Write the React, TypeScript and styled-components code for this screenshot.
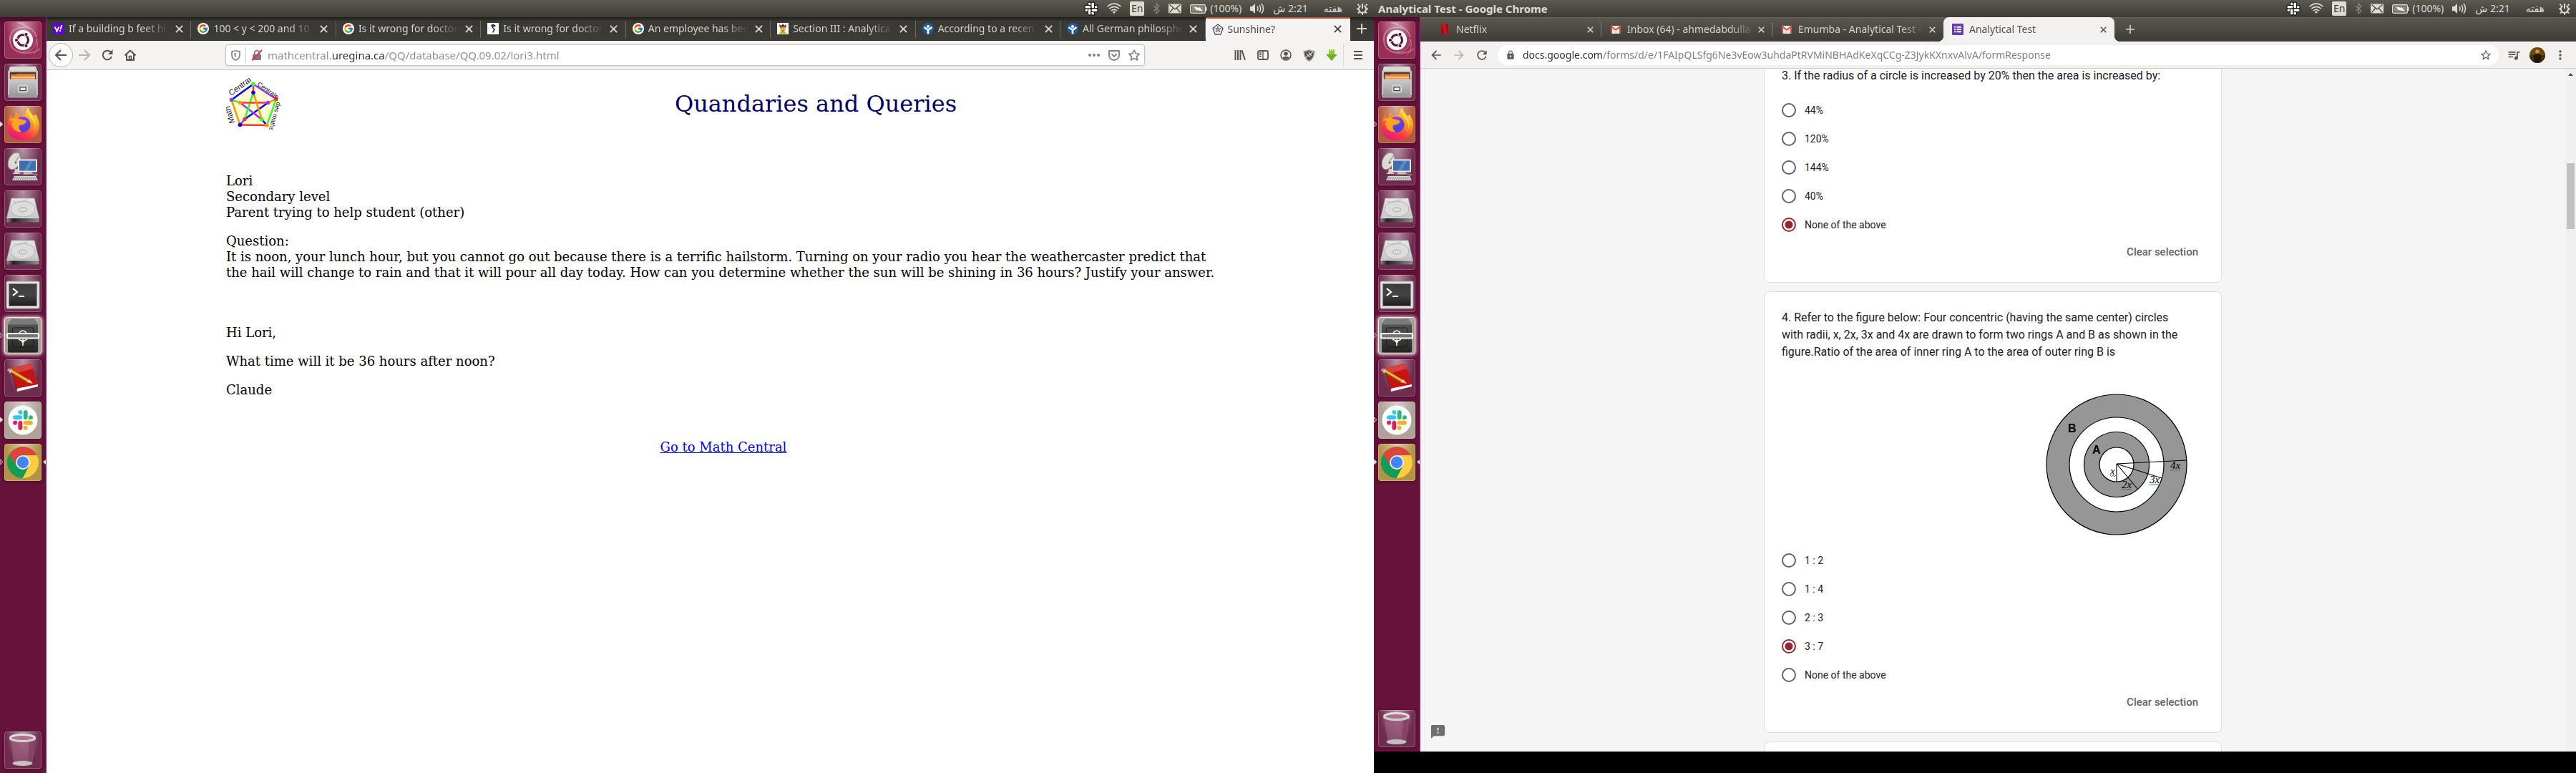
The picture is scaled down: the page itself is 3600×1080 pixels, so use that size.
import React, { useLayoutEffect, useRef } from "react";
import styled, { createGlobalStyle, css } from "styled-components";
import { FcGoogle } from "react-icons/fc";
import { MdLock, MdOutlineStarBorder, MdQueueMusic, MdMoreVert, MdFeedback, MdArrowBack, MdArrowForward, MdRefresh } from "react-icons/md";

const uiFont = `"Noto Sans", "Open Sans", "DejaVu Sans", sans-serif`;

const GlobalStyle = createGlobalStyle`
  *, *::before, *::after { box-sizing: border-box; }
  body { margin: 0; background: #000; }
  button { border: 0; padding: 0; margin: 0; background: none; color: inherit; font: inherit; }
  svg { display: block; flex: none; }
`;

/* ---------- desktop ---------- */

const Desktop = styled.div`
  display: grid;
  grid-template-columns: 8fr 7fr;
  height: 100vh;
  font-family: ${uiFont};
  font-size: 14px;
`;

const Screen = styled.section<{ $shorter?: boolean }>`
  display: flex;
  flex-direction: column;
  min-width: 0;
  min-height: 0;
  margin-bottom: ${(p) => (p.$shorter ? 30 : 0)}px;
`;

const Panel = styled.header`
  display: flex;
  align-items: center;
  justify-content: space-between;
  height: 24px;
  flex: none;
  padding: 0 8px 0 6px;
  color: #dfdbd2;
  background: linear-gradient(#5f5d50 0, #59574e 2px, #3e3d38 100%);
`;

const PanelTitle = styled.strong`
  font-size: 15px;
  line-height: 20px;
  font-weight: 700;
`;

const Indicators = styled.div`
  display: flex;
  align-items: center;
  gap: 12px;
  line-height: 20px;
`;

const LanguageBadge = styled.span`
  width: 20px;
  height: 20px;
  border-radius: 2px;
  background: #dfdbd2;
  color: #3c3b37;
  font-size: 14px;
  text-align: center;
`;

const Battery = styled.span`
  display: flex;
  align-items: center;
  gap: 4px;
`;

const Clock = styled.time`
  display: flex;
  gap: 22px;
  margin-right: 8px;
`;

const Workspace = styled.div`
  display: flex;
  flex: 1;
  min-height: 0;
`;

/* ---------- launcher ---------- */

const LauncherBar = styled.nav`
  display: flex;
  flex-direction: column;
  gap: 7px;
  width: 65px;
  flex: none;
  padding: 6px 0;
  background: linear-gradient(#4a0c29 0, #67123a 10px);
  border-right: 1px solid #7d3573;
`;

const Tile = styled.button<{ $tone?: string; $glow?: boolean; $last?: boolean }>`
  position: relative;
  width: 52px;
  height: 52px;
  margin: ${(p) => (p.$last ? "auto 6px 0" : "0 6px")};
  border-radius: 4px;
  background: radial-gradient(ellipse at 50% 0, rgba(255, 255, 255, 0.5), rgba(255, 255, 255, 0) 65%),
    ${(p) => p.$tone || "#6f2c4f"};
  box-shadow: inset 0 0 0 1px rgba(255, 255, 255, 0.25), 0 1px 4px rgba(0, 0, 0, 0.35);
  ${(p) =>
    p.$glow &&
    css`
      box-shadow: inset 0 0 0 1px #f4f0ec, 0 0 5px 1px rgba(255, 255, 255, 0.8);
    `}
`;

const Pip = styled.svg<{ $side: "left" | "right" }>`
  position: absolute;
  top: 21px;
  ${(p) => (p.$side === "left" ? "left: -6px;" : "right: -6px;")}
`;

/* ---------- shared browser parts ---------- */

const Window = styled.main`
  display: flex;
  flex-direction: column;
  flex: 1;
  min-width: 0;
`;

const TabTitle = styled.span`
  flex: 1;
  min-width: 0;
  overflow: hidden;
  white-space: nowrap;
  line-height: 20px;
  mask-image: linear-gradient(to left, transparent 0, #000 36px);
`;

const CloseButton = styled.button`
  display: grid;
  place-items: center;
  width: 16px;
  height: 16px;
`;

const IconButton = styled.button<{ $faded?: boolean }>`
  display: grid;
  place-items: center;
  width: 32px;
  height: 32px;
  flex: none;
  color: ${(p) => (p.$faded ? "#b4b3b0" : "#55534f")};
`;

const Address = styled.input<{ $size: number; $from: number; $to: number; $soft: string; $strong: string }>`
  flex: 1;
  min-width: 0;
  border: 0;
  outline: 0;
  padding: 0;
  height: 24px;
  font: ${(p) => p.$size}px/24px ${uiFont};
  color: transparent;
  background: linear-gradient(
    to right,
    ${(p) => p.$soft} ${(p) => p.$from}px,
    ${(p) => p.$strong} ${(p) => p.$from}px,
    ${(p) => p.$strong} ${(p) => p.$to}px,
    ${(p) => p.$soft} ${(p) => p.$to}px
  );
  background-clip: text;
  -webkit-background-clip: text;
`;

/* ---------- firefox ---------- */

const FoxTabs = styled.div`
  display: flex;
  height: 33px;
  background: linear-gradient(#1e1d1b 0, #3a3935 6px, #3c3b37 100%);
  border-bottom: 1px solid #2a2926;
`;

const FoxTab = styled.div<{ $active?: boolean }>`
  display: flex;
  align-items: center;
  gap: 6px;
  flex: 1;
  min-width: 0;
  padding: 0 9px;
  color: ${(p) => (p.$active ? "#4c4b48" : "#d6d3cc")};
  background: ${(p) => (p.$active ? "#f4f3f1" : "linear-gradient(#6b6a66, #6b6a66) right 5px / 1px 24px no-repeat")};
  ${(p) => p.$active && "margin-bottom: -1px; box-shadow: inset 0 2px #b3573b;"}
`;

const FoxNewTab = styled.button`
  display: grid;
  place-items: center;
  width: 33px;
  color: #d6d3cc;
`;

const FoxToolbar = styled.div`
  display: flex;
  align-items: center;
  height: 41px;
  padding: 0 3px;
  background: #f4f3f1;
  border-bottom: 1px solid #c3c2c0;
`;

const BackCircle = styled(IconButton)`
  width: 34px;
  height: 34px;
  border-radius: 50%;
  border: 1px solid #b5b4b1;
  background: #fcfcfb;
`;

const FoxUrl = styled.form`
  display: flex;
  align-items: center;
  flex: 1;
  min-width: 0;
  height: 30px;
  margin: 0 117px;
  padding: 0 0 0 6px;
  background: #fff;
  border: 1px solid #c3c2c0;
  border-radius: 4px;
  box-shadow: 0 1px 3px rgba(0, 0, 0, 0.07);
`;

const UrlButton = styled.button<{ $wide?: boolean }>`
  display: grid;
  place-items: center;
  width: ${(p) => (p.$wide ? 30 : 28)}px;
  height: 22px;
  color: #7d7c79;
`;

const ShieldButton = styled(UrlButton)`
  width: 22px;
  padding-right: 6px;
  border-right: 1px solid #c9c8c6;
`;

const MenuButton = styled(IconButton)`
  width: 40px;
  border-left: 1px solid #d8d7d4;
`;

const MathPage = styled.article`
  flex: 1;
  padding: 11px 214px 0 251px;
  background: #fff;
  color: #000;
  font: 18px/22px "DejaVu Serif", serif;
`;

const MathHeader = styled.div`
  display: flex;
  align-items: center;
  margin-bottom: 61px;
`;

const LogoCell = styled.div`
  width: 258px;
`;

const MathTitle = styled.h1`
  flex: 1;
  margin: 0;
  color: #000066;
  font-size: 32px;
  line-height: 40px;
  font-weight: 400;
  text-align: center;
`;

const Para = styled.p<{ $after?: number }>`
  margin: 0 0 ${(p) => p.$after ?? 18}px;
`;

const CentredLink = styled.div`
  text-align: center;
  a { color: #0000ee; }
`;

/* ---------- chrome ---------- */

const ChromeTabs = styled.div`
  display: flex;
  height: 34px;
  padding-left: 14px;
  background: linear-gradient(#67655a 0, #59574e 2px, #3c3b37 100%);
`;

const ChromeTab = styled.div<{ $active?: boolean; $line?: boolean }>`
  position: relative;
  display: flex;
  align-items: center;
  gap: 8px;
  width: 239px;
  padding: 0 8px 0 12px;
  color: ${(p) => (p.$active ? "#55534f" : "#d6d3cc")};
  ${CloseButton} { margin-left: -8px; }
  ${(p) => p.$line && "background: linear-gradient(#85837b, #85837b) right 7px / 1px 20px no-repeat;"}
  ${(p) =>
    p.$active &&
    css`
      background: #f2f1f0;
      border-radius: 8px 8px 0 0;
      &::before, &::after {
        content: "";
        position: absolute;
        bottom: 0;
        width: 8px;
        height: 8px;
      }
      &::before { left: -8px; background: radial-gradient(circle at 0 0, transparent 8px, #f2f1f0 8px); }
      &::after { right: -8px; background: radial-gradient(circle at 100% 0, transparent 8px, #f2f1f0 8px); }
    `}
`;

const ChromeNewTab = styled.button`
  display: grid;
  place-items: center;
  width: 44px;
  color: #d6d3cc;
`;

const ChromeToolbar = styled.div`
  display: flex;
  align-items: center;
  height: 38px;
  padding: 0 6px;
  background: #f2f1f0;
  border-bottom: 1px solid #cfcecb;
`;

const ChromeUrl = styled.form`
  display: flex;
  align-items: center;
  gap: 10px;
  flex: 1;
  min-width: 0;
  height: 28px;
  margin: 0 5px 0 6px;
  padding: 0 9px 0 11px;
  border-radius: 14px;
  background: #fff;
  color: #5f5e5b;
`;

const Avatar = styled.button`
  width: 22px;
  height: 22px;
  margin: 0 5px 0 6px;
`;

const FormArea = styled.div`
  display: flex;
  flex: 1;
  min-height: 0;
  background: #f5f5f5;
`;

const FormScroll = styled.div`
  flex: 1;
  min-width: 0;
  overflow: hidden;
`;

const FormColumn = styled.div`
  display: flex;
  flex-direction: column;
  gap: 12px;
  max-width: 640px;
  margin: 0 auto;
`;

const Card = styled.fieldset<{ $empty?: boolean }>`
  margin: 0;
  min-width: 0;
  min-height: ${(p) => (p.$empty ? 160 : 0)}px;
  padding: 24px;
  border: 1px solid #dadce0;
  border-radius: 8px;
  background: #fff;
  color: #202124;
  font-family: Roboto, sans-serif;
`;

const Prompt = styled.legend`
  float: left;
  width: 100%;
  padding: 0 24px 0 0;
  margin-bottom: 16px;
  font-size: 16px;
  line-height: 24px;
`;

const Figure = styled.figure`
  clear: both;
  display: flex;
  justify-content: flex-end;
  margin: 0;
  padding: 30px 23px 15px 0;
`;

const Options = styled.div`
  clear: both;
`;

const Option = styled.label`
  display: flex;
  align-items: center;
  gap: 12px;
  height: 40px;
  font-size: 14px;
  line-height: 20px;
`;

const Radio = styled.input`
  appearance: none;
  width: 20px;
  height: 20px;
  margin: 0;
  border: 2px solid #5f6368;
  border-radius: 50%;
  &:checked {
    border-color: #952734;
    background: radial-gradient(circle, #952734 5px, transparent 6px);
  }
`;

const CardFooter = styled.div`
  display: flex;
  justify-content: flex-end;
  padding-right: 8px;
`;

const ClearButton = styled.button`
  height: 36px;
  color: #5f6368;
  font-size: 15px;
  font-weight: 500;
`;

/* Floats over the left margin of the form without taking room from it. */
const FeedbackSpot = styled.div`
  display: flex;
  align-items: flex-end;
  width: 36px;
  margin-right: -36px;
  padding: 0 0 16px 13px;
  color: #6f6f6f;
`;

const ScrollTrack = styled.div`
  display: flex;
  flex-direction: column;
  align-items: center;
  width: 15px;
  padding-top: 6px;
  background: #f1f1f1;
`;

const ScrollThumb = styled.div`
  width: 11px;
  height: 92px;
  margin-top: 122px;
  background: #c1c1c1;
`;

/* ---------- drawings ---------- */

const slackParts: [string, string][] = [
  ["#E01E5A", "M25.8 77.6c0 7.1-5.8 12.9-12.9 12.9S0 84.7 0 77.6s5.8-12.9 12.9-12.9h12.9v12.9zm6.5 0c0-7.1 5.8-12.9 12.9-12.9s12.9 5.8 12.9 12.9v32.3c0 7.1-5.8 12.9-12.9 12.9s-12.9-5.8-12.9-12.9V77.6z"],
  ["#36C5F0", "M45.2 25.8c-7.1 0-12.9-5.8-12.9-12.9S38.1 0 45.2 0s12.9 5.8 12.9 12.9v12.9H45.2zm0 6.5c7.1 0 12.9 5.8 12.9 12.9s-5.8 12.9-12.9 12.9H12.9C5.8 58.1 0 52.3 0 45.2s5.8-12.9 12.9-12.9h32.3z"],
  ["#2EB67D", "M97 45.2c0-7.1 5.8-12.9 12.9-12.9s12.9 5.8 12.9 12.9-5.8 12.9-12.9 12.9H97V45.2zm-6.5 0c0 7.1-5.8 12.9-12.9 12.9s-12.9-5.8-12.9-12.9V12.9C64.7 5.8 70.5 0 77.6 0s12.9 5.8 12.9 12.9v32.3z"],
  ["#ECB22E", "M77.6 97c7.1 0 12.9 5.8 12.9 12.9s-5.8 12.9-12.9 12.9-12.9-5.8-12.9-12.9V97h12.9zm0-6.5c-7.1 0-12.9-5.8-12.9-12.9s5.8-12.9 12.9-12.9h32.3c7.1 0 12.9 5.8 12.9 12.9s-5.8 12.9-12.9 12.9H77.6z"],
];

const SlackStatus = () => (
  <svg width="20" height="20" viewBox="-10 -10 143 143">
    {slackParts.map(([c, d]) => <path key={c} d={d} fill="#fff" stroke="#111" strokeWidth="16" paintOrder="stroke" />)}
  </svg>
);

const Wifi = () => (
  <svg width="20" height="16" viewBox="0 0 20 16" fill="none" stroke="#dfdbd2" strokeWidth="1.6">
    <path d="M.6 5.2Q10-3 19.4 5.2M3.2 8.2Q10 2.4 16.8 8.2M5.8 11Q10 7.6 14.2 11" />
    <path d="M7.6 12.6 10 15l2.4-2.4q-2.4-1.6-4.8 0z" fill="#dfdbd2" stroke="none" />
  </svg>
);

const Bluetooth = () => (
  <svg width="10" height="16" viewBox="0 0 10 16" fill="none" stroke="#85837b" strokeWidth="1.4">
    <path d="M1 4.5 9 11 5 15V1l4 4-8 6.5" />
  </svg>
);

const Mail = () => (
  <svg width="18" height="14" viewBox="0 0 18 14">
    <rect width="18" height="13" y=".5" rx="1" fill="#dfdbd2" />
    <path d="M1.5 1.5 9 8l7.5-6.5M1.5 12.5l5.1-6M16.5 12.5l-5.1-6" fill="none" stroke="#44433d" strokeWidth="1.2" />
  </svg>
);

const BatteryIcon = () => (
  <svg width="24" height="13" viewBox="0 0 24 13">
    <rect x=".7" y=".7" width="20.6" height="11.6" rx="1.5" fill="none" stroke="#dfdbd2" strokeWidth="1.4" />
    <rect x="2.5" y="2.5" width="17" height="8" fill="#8b8980" />
    <path d="M22 4h1.5v5H22z" fill="#dfdbd2" />
    <path d="M5 3l8 2V3.500L18 10l-8-2v1.500z" fill="#f4f2ee" />
  </svg>
);

const Volume = () => (
  <svg width="20" height="16" viewBox="0 0 20 16" fill="none" stroke="#dfdbd2" strokeWidth="1.5">
    <path d="M0 5h3l4-4v14l-4-4H0z" fill="#dfdbd2" stroke="none" />
    <path d="M10 5q2 3 0 6M13 3q3.5 5 0 10M16 1q5 7 0 14" />
  </svg>
);

const Power = () => (
  <svg width="16" height="17" viewBox="0 0 16 17" fill="none" stroke="#dfdbd2" strokeWidth="2">
    <path d="M5.500 4A5.200 5.200 0 1 0 10.500 4" />
    <path d="M8 1v7" />
    <path d="M3 3.500 1.500 2M13 3.500 14.500 2M2.500 8.500H0M13.500 8.500H16M3.800 12.600 2 14.500M12.200 12.600l1.800 1.900M8 14v2.800" />
  </svg>
);

const Cross = ({ size = 9 }: { size?: number }) => (
  <svg width={size} height={size} viewBox="0 0 10 10" stroke="currentColor" strokeWidth="1.8">
    <path d="M.8.8 9.2 9.2M9.2.8.8 9.2" />
  </svg>
);

const Plus = ({ size = 14 }: { size?: number }) => (
  <svg width={size} height={size} viewBox="0 0 14 14" stroke="currentColor" strokeWidth="2">
    <path d="M7 0v14M0 7h14" />
  </svg>
);

const Drive = () => (
  <svg width="52" height="52" viewBox="0 0 52 52">
    <defs>
      <linearGradient id="driveTop" x2="0" y2="1"><stop stopColor="#e6e6e6" /><stop offset="1" stopColor="#c6c6c6" /></linearGradient>
      <linearGradient id="driveFront"><stop stopColor="#888" /><stop offset=".2" stopColor="#222" /><stop offset="1" stopColor="#8b8f8b" /></linearGradient>
    </defs>
    <path d="M10 11h32l6.5 27h-45z" fill="url(#driveTop)" stroke="#aaa" strokeWidth=".6" />
    <path d="M3.5 38.500h45v5q0 1-1 1h-43q-1 0-1-1z" fill="url(#driveFront)" />
    <path d="M3.5 38.500h45" stroke="#f5f5f5" />
    <ellipse cx="26" cy="26" rx="17" ry="11" fill="#dcdcdc" stroke="#b2b2b2" />
    <ellipse cx="26" cy="27" rx="5.5" ry="3" fill="#ddd" stroke="#aaa" />
    <path d="M12 15q10 4 20-3" fill="none" stroke="#bbb" />
  </svg>
);

const art: Record<string, React.ReactNode> = {
  dash: (
    <svg width="52" height="52" viewBox="0 0 52 52">
      <g fill="none" stroke="#fff" opacity=".35">
        <path d="M8 26Q8 8 28 8q14 1 17 14Q42 8 18 1" strokeWidth="1.5" /><path d="M26 43q19-1 19-19 4 12-4 22" /><path d="M8 20q-3 22 20 24 14 1 22-6" strokeWidth="1.5" />
      </g>
      <circle cx="26" cy="26" r="14" fill="#fff" />
      <circle cx="26" cy="26" r="7.5" fill="none" stroke="#5b1434" strokeWidth="3.2" />
      <g fill="#5b1434" stroke="#fff" strokeWidth="1"><circle cx="17" cy="26" r="2.6" /><circle cx="30.5" cy="18" r="2.6" /><circle cx="30.5" cy="34" r="2.6" /></g>
    </svg>
  ),
  files: (
    <svg width="52" height="52" viewBox="0 0 52 52">
      <defs><linearGradient id="cab" x2="0" y2="1"><stop stopColor="#c9c9c9" /><stop offset="1" stopColor="#949494" /></linearGradient></defs>
      <path d="M8 4h36l3 10v30H5V14z" fill="#d9d9d9" /><path d="M5 10h42v33H5z" fill="#b9b9b9" />
      <path d="M8 12h36v10H8z" fill="#453b33" />
      <path d="M9 15h8l1-1h25v8H9z" fill="#e87b32" /><path d="M10 18h33v3H10z" fill="#fbdcb4" /><path d="M10 19.500h33v2.500H10z" fill="#ef9a4f" />
      <path d="M7 22h38l1 25H6z" fill="url(#cab)" stroke="#ddd" strokeWidth=".6" />
      <rect x="19.5" y="30" width="13" height="10" rx="2" fill="#bdbdbd" stroke="#e2e2e2" />
      <rect x="22" y="33" width="8" height="4.5" fill="#eee" stroke="#333" />
    </svg>
  ),
  firefox: (
    <svg width="52" height="52" viewBox="0 0 52 52">
      <defs>
        <linearGradient id="foxBody" x1=".8" y1="0" x2=".3" y2="1"><stop stopColor="#fff44f" /><stop offset=".4" stopColor="#ff9a1f" /><stop offset=".75" stopColor="#ff3647" /><stop offset="1" stopColor="#e31587" /></linearGradient>
        <radialGradient id="foxGlobe" cy=".2"><stop stopColor="#a23fe0" /><stop offset="1" stopColor="#5440d8" /></radialGradient>
      </defs>
      <path d="M33 2q2 6 8 12l3-2q5 8 5 15-1 21-23 21Q5 47 4 29q0-9 6-17l1 6 4-3 1-6q4 3 5 6 5 0 8-3 1-6 4-10z" fill="url(#foxBody)" />
      <circle cx="25.5" cy="26" r="11" fill="url(#foxGlobe)" />
      <path d="M6 20q8-6 15-2l10 3q-1 5-10 6-2 5 3 9-9 1-13-7-2-5 1-8z" fill="#ffa425" />
      <path d="M33 3q3 9 8 14 6 9-1 20 5-10-1-18-7-7-6-16z" fill="#ffe647" opacity=".8" />
    </svg>
  ),
  remote: (
    <svg width="52" height="52" viewBox="0 0 52 52">
      <ellipse cx="14" cy="18" rx="8" ry="12.5" transform="rotate(25 14 18)" fill="#dcdcd4" stroke="#8e8e86" />
      <path d="M16 18l6-8" stroke="#777" /><circle cx="16" cy="20" r="1.5" fill="#666" />
      <path d="M15 29h4l1 5 3 2H11l3-2z" fill="#cfcfc8" />
      <rect x="19" y="15.5" width="27" height="18" rx="1" fill="#e9e9e4" />
      <rect x="21" y="17.5" width="23" height="14" fill="#3e6ead" /><path d="M28 31l7-13h5l-7 13z" fill="#7ea3d3" opacity=".5" />
      <path d="M28 33.500h10l3 3H26z" fill="#c9c9c2" />
      <path d="M14 39h30l3 6H11z" fill="#d8d8d0" /><path d="M14 41h30M13 43h32" stroke="#777" strokeDasharray="2 1" />
      <path d="M35 36h8q5 0 3 2h-5" fill="none" stroke="#999" />
    </svg>
  ),
  drive: <Drive />,
  terminal: (
    <svg width="52" height="52" viewBox="0 0 52 52">
      <defs><linearGradient id="term" x2="0" y2="1"><stop stopColor="#3c3c3c" /><stop offset=".5" stopColor="#444" /><stop offset="1" stopColor="#1c1c1c" /></linearGradient></defs>
      <rect x="3" y="9" width="46" height="38" rx="1.5" fill="#e3e3e3" stroke="#9d9d9d" />
      <rect x="6.5" y="12.5" width="39" height="31" fill="url(#term)" stroke="#8a8a8a" />
      <path d="M12 19l6 5-6 5M20 30h8" fill="none" stroke="#fff" strokeWidth="2.2" />
    </svg>
  ),
  vault: (
    <svg width="52" height="52" viewBox="0 0 52 52">
      <defs><linearGradient id="safe" x2="0" y2="1"><stop stopColor="#5d605d" /><stop offset="1" stopColor="#232522" /></linearGradient></defs>
      <path d="M10 2.500h32l5 8v37q0 2-2 2H7q-2 0-2-2v-37z" fill="url(#safe)" />
      <path d="M10 2.500h32l5 8H5z" fill="#787b79" />
      <rect x="11.5" y="15" width="29" height="27" rx="2" fill="none" stroke="#1c1d1c" />
      <path d="M21 22q5-6 10 0" fill="none" stroke="#eee" strokeWidth="1.5" />
      <path d="M20 31l6 3 6-3M26 31v9" fill="none" stroke="#eee" strokeWidth="1.6" /><circle cx="26" cy="34" r="2" fill="#fff" />
      <rect x="4" y="23" width="44" height="6.5" rx="2" fill="#777" stroke="#fff" strokeWidth="2" />
    </svg>
  ),
  notes: (
    <svg width="52" height="52" viewBox="0 0 52 52">
      <path d="M9 12 38 6l9 30-29 7z" fill="#c81316" /><path d="M9 12 38 6l2 7-28 8z" fill="#d9403b" />
      <path d="M17 41l30-6v3l-29 7z" fill="#fff" /><path d="M9 12l9 31" stroke="#8c0c0c" strokeWidth="1" />
      <path d="M9 16l25 15" stroke="#8b5d10" strokeWidth="5" /><path d="M9 15.500l25 15" stroke="#f3bb2f" strokeWidth="3" />
      <path d="M5 14l4 2.500" stroke="#e98d8d" strokeWidth="4" /><path d="M32 32l3-4 5 6z" fill="#f2d8b4" />
      <path d="M10 13.500 8 19" stroke="#ccc" strokeWidth="2" />
    </svg>
  ),
  slack: (
    <svg width="52" height="52" viewBox="0 0 52 52">
      <circle cx="26" cy="26" r="20.5" fill="#fff" />
      <g transform="translate(12 12) scale(.228)">{slackParts.map(([c, d]) => <path key={c} d={d} fill={c} />)}</g>
    </svg>
  ),
  chrome: (
    <svg width="52" height="52" viewBox="0 0 52 52">
      <circle cx="26" cy="26" r="22" fill="#d9463b" />
      <path d="M26 16h19.600A22 22 0 0 1 25.500 48l9-17z" fill="#ffcd40" />
      <path d="M25.500 48A22 22 0 0 1 7 15L17.300 31l8.700 5 8.500-5z" fill="#0f9d58" />
      <circle cx="26" cy="26" r="10" fill="#f1f1f1" /><circle cx="26" cy="26" r="8.2" fill="#4285f4" />
    </svg>
  ),
  trash: (
    <svg width="52" height="52" viewBox="0 0 52 52">
      <path d="M9 12h34l-4 33q-13 4-26 0z" fill="#9b5a7b" opacity=".65" /><path d="M35 14l-2 28h5l4-29z" fill="#7c3258" opacity=".5" />
      <ellipse cx="25.5" cy="44.5" rx="14" ry="3.5" fill="#bfc2bd" />
      <ellipse cx="25.5" cy="9" rx="17" ry="4.5" fill="#a97090" stroke="#dcded9" strokeWidth="3" />
      <path d="M7.500 10q18 6 36 0v2q-18 5-36 0z" fill="#c8cac5" />
    </svg>
  ),
};

const PentagonLogo = () => (
  <svg width="80" height="72" viewBox="0 0 80 72" role="img" aria-label="Math Central">
    <path d="M38 8.500 70 29.500 57 66 19.500 65.500 7.500 30.500z" fill="#ffffd0" />
    <g strokeWidth="2.6" strokeLinecap="round">
      <path d="M7.500 30.500 38 8.500M58.500 34.500 26 57.500M57 66l-7-8" stroke="#00f" />
      <path d="M38 8.500 70 29.500M19.500 34.500 50 58M19.500 65.500l6.500-8" stroke="#93f" />
      <path d="M70 29.500 57 66M38 20.500 26 57.500M7.500 30.500l12 4" stroke="#3f3" />
      <path d="M57 66 19.500 65.500M19.500 34.500h39M38 8.500v12" stroke="#f33" />
      <path d="M19.500 65.500 7.500 30.500M38 20.500 50 58M70 29.500l-11.500 5" stroke="#f90" />
    </g>
    <g fill="#3f3"><circle cx="38" cy="8.5" r="2.8" /><circle cx="50" cy="58" r="2.8" /></g>
    <g fill="#f33"><circle cx="70" cy="29.5" r="2.8" /><circle cx="26" cy="57.5" r="2.8" /></g>
    <g fill="#f90"><circle cx="57" cy="66" r="2.8" /><circle cx="19.5" cy="34.5" r="2.8" /></g>
    <g fill="#00f"><circle cx="19.5" cy="65.5" r="2.8" /><circle cx="38" cy="20.5" r="2.8" /></g>
    <g fill="#93f"><circle cx="7.5" cy="30.5" r="2.8" /><circle cx="58.5" cy="34.5" r="2.8" /></g>
    <g fill="#111" fontFamily="Liberation Sans, sans-serif">
      <text transform="translate(7 25) rotate(-36)" fontSize="11">Central</text>
      <text transform="translate(43 10) rotate(35)" fontSize="9">Centrale</text>
      <text transform="translate(71 33) rotate(106)" fontSize="9">des maths</text>
      <text transform="translate(12 62) rotate(-107)" fontSize="11">Math</text>
    </g>
  </svg>
);

const Rings = () => {
  const radii: [number, string][] = [[98, "#969696"], [66, "#fff"], [45.5, "#969696"], [24, "#fff"]];
  const wave = (x: number, y: number) => `M${x} ${y}l2 2 2-2 2 2 2-2 2 2 2-2 2 2`;
  return (
    <svg width="198" height="198" viewBox="-99 -99 198 198" role="img" aria-label="Concentric circles with rings A and B">
      {radii.map(([r, fill]) => <circle key={r} r={r} fill={fill} stroke="#000" strokeWidth="1.2" />)}
      <path d="M0-1 98-6M0-1 63 19M0-1 30 35M0-1V24" stroke="#000" strokeWidth="1.1" />
      <g fontFamily="Liberation Sans, sans-serif" fontWeight="700" fontSize="16"><text x="-68" y="-45">B</text><text x="-34" y="-15">A</text></g>
      <g fontFamily="Liberation Serif, serif" fontStyle="italic" fontSize="15">
        <text x="-9" y="14">x</text><text x="7" y="33">2x</text><text x="46" y="26">3x</text><text x="75" y="6">4x</text>
      </g>
      <g fill="none" stroke="#1c8a1c" strokeWidth=".9"><path d="M-9 15l2 2 2-2 2 2 2-2" /><path d={wave(7, 34)} /><path d={wave(46, 27)} /><path d={wave(75, 7)} /></g>
    </svg>
  );
};

const RoundMark = styled.span`
  display: grid;
  place-items: center;
  width: 16px;
  height: 16px;
  flex: none;
  border-radius: 50%;
  background: #fff;
`;

const favicons: Record<string, React.ReactNode> = {
  yahoo: (
    <svg width="16" height="16" viewBox="0 0 16 16"><rect width="16" height="16" fill="#6001d2" /><path d="M2.500 5.500 5.500 11M8.500 5.500 4.800 13M12.500 3l-2 6" stroke="#fff" strokeWidth="1.9" /><circle cx="10" cy="11" r="1.2" fill="#fff" /></svg>
  ),
  google: <RoundMark><FcGoogle size={14} /></RoundMark>,
  gavel: (
    <svg width="16" height="16" viewBox="0 0 16 16"><rect width="16" height="16" fill="#fff" /><path d="M5 3q3-2 6 0l1 2H9l-2 2-1-2zM8 6l3 3-3 5-1-1 2-4-2-2z" fill="#1e2a4f" /></svg>
  ),
  king: (
    <svg width="16" height="16" viewBox="0 0 16 16"><rect width="16" height="16" fill="#fff" /><path d="M3 2l3 2 2-3 2 3 3-2-1 5H4z" fill="#3a3020" /><circle cx="8" cy="9" r="4" fill="#e8c840" /><path d="M4 5.500h8" stroke="#d0246a" strokeWidth="1.5" /><path d="M2 15q6-6 12 0z" fill="#c9a81f" /><path d="M6 8h1M9 8h1M6.500 11h3" stroke="#332" /></svg>
  ),
  person: (
    <svg width="16" height="16" viewBox="0 0 16 16"><circle cx="8" cy="8" r="8" fill="#1d5c96" /><circle cx="8" cy="5" r="2" fill="#fff" /><path d="M2.500 6 8 10l5.500-4M8 9v6.500" stroke="#fff" strokeWidth="2.6" fill="none" /></svg>
  ),
  math: (
    <svg width="16" height="16" viewBox="0 0 16 16" fill="none"><rect width="16" height="16" fill="#fff" /><path d="M8 1l7 5.500-3 8.500H4L1 6.500z" stroke="#446" strokeWidth="1.3" /><path d="M8 3v3l3 6M5 7l6 5" stroke="#c33" /><path d="M3 7h10M5 12l7-5" stroke="#36a" /><path d="M8 4 5 12" stroke="#293" /></svg>
  ),
  netflix: (
    <svg width="16" height="16" viewBox="0 0 16 16"><path d="M3 0h3.300v16L3 16zM9.700 0H13v16H9.700z" fill="#b1060f" /><path d="M3 0h3.300L13 16H9.700z" fill="#e50914" /></svg>
  ),
  gmail: (
    <svg width="16" height="16" viewBox="0 0 16 16"><rect x="1" y="3" width="14" height="11" rx="1" fill="#eee" /><path d="M2 14V4l6 5 6-5v10" fill="none" stroke="#dd4b3e" strokeWidth="2" /><path d="M3 13.500 8 9l5 4.500" fill="#ddd" /></svg>
  ),
  forms: (
    <svg width="16" height="16" viewBox="0 0 16 16"><rect width="16" height="16" rx="1" fill="#673ab7" /><path d="M3 4.800h2M6.500 4.800H13M3 8h2M6.500 8H13M3 11.200h2M6.500 11.200H13" stroke="#fff" strokeWidth="1.9" /></svg>
  ),
};

/* ---------- pieces ---------- */

const SystemPanel = ({ title }: { title?: string }) => (
  <Panel>
    <PanelTitle>{title}</PanelTitle>
    <Indicators>
      <SlackStatus />
      <Wifi />
      <LanguageBadge>En</LanguageBadge>
      <Bluetooth />
      <Mail />
      <Battery><BatteryIcon />(100%)</Battery>
      <Volume />
      <Clock dir="rtl"><span>هفته</span><span>2:21 ش</span></Clock>
      <Power />
    </Indicators>
  </Panel>
);

type Mark = "solid" | "open" | "blue";
interface App { name: string; icon: string; tone?: string; glow?: boolean; left?: Mark; right?: boolean }

const launcherApps = (screen: "left" | "right"): App[] => [
  { name: "Search your computer", icon: "dash", tone: "#9a2f55" },
  { name: "Files", icon: "files" },
  { name: "Firefox", icon: "firefox", tone: "#b25a3f", left: screen === "left" ? "solid" : "open" },
  { name: "Remote desktop", icon: "remote" },
  { name: "Volume 1", icon: "drive" },
  { name: "Volume 2", icon: "drive" },
  { name: "Terminal", icon: "terminal" },
  { name: "Passwords", icon: "vault", tone: "#a59b93", glow: true, left: "blue" },
  { name: "Notes", icon: "notes" },
  { name: "Slack", icon: "slack", tone: "#aea299", left: screen === "left" ? "solid" : "open" },
  { name: "Chrome", icon: "chrome", tone: "#b19446", left: screen === "left" ? "open" : "solid", right: true },
];

const Launcher = ({ screen }: { screen: "left" | "right" }) => (
  <LauncherBar aria-label="Launcher">
    {launcherApps(screen).map((a) => (
      <Tile key={a.name} aria-label={a.name} $tone={a.tone} $glow={a.glow}>
        {art[a.icon]}
        {a.left && (
          <Pip $side="left" width="5" height="9" viewBox="0 0 5 9">
            <path d="M0 1l4 3.500L0 8z" fill={a.left === "solid" ? "#dfdbd2" : "none"} stroke={a.left === "blue" ? "#8fc0ee" : "#dfdbd2"} />
          </Pip>
        )}
        {a.right && (
          <Pip $side="right" width="5" height="9" viewBox="0 0 5 9"><path d="M5 1 1 4.500 5 8z" fill="#dfdbd2" /></Pip>
        )}
      </Tile>
    ))}
    <Tile aria-label="Trash" $last>{art.trash}</Tile>
  </LauncherBar>
);

const foxTabs: [string, string][] = [
  ["yahoo", "If a building b feet hi"],
  ["google", "100 < y < 200 and 10"],
  ["google", "Is it wrong for doctor"],
  ["gavel", "Is it wrong for doctor"],
  ["google", "An employee has bee"],
  ["king", "Section III : Analytica"],
  ["person", "According to a recen"],
  ["person", "All German philosphe"],
  ["math", "Sunshine?"],
];

const Firefox = () => (
  <Window>
    <FoxTabs role="tablist">
      {foxTabs.map(([icon, title], i) => (
        <FoxTab key={i} role="tab" aria-selected={i === 8} $active={i === 8}>
          {favicons[icon]}
          <TabTitle>{title}</TabTitle>
          <CloseButton aria-label="Close tab"><Cross size={11} /></CloseButton>
        </FoxTab>
      ))}
      <FoxNewTab aria-label="New tab"><Plus /></FoxNewTab>
    </FoxTabs>
    <FoxToolbar>
      <BackCircle aria-label="Back">
        <svg width="18" height="16" viewBox="0 0 18 16" fill="none" stroke="currentColor" strokeWidth="2"><path d="M17 8H2M9 1 2 8l7 7" /></svg>
      </BackCircle>
      <IconButton aria-label="Forward" $faded>
        <svg width="18" height="16" viewBox="0 0 18 16" fill="none" stroke="currentColor" strokeWidth="2"><path d="M1 8h15M9 1l7 7-7 7" /></svg>
      </IconButton>
      <IconButton aria-label="Reload">
        <svg width="16" height="16" viewBox="0 0 16 16" fill="none" stroke="currentColor" strokeWidth="2"><path d="M14 10A6.300 6.300 0 1 1 12.500 3.500L14 5" /><path d="M15.500 0v7H9z" fill="currentColor" stroke="none" /></svg>
      </IconButton>
      <IconButton aria-label="Home">
        <svg width="16" height="16" viewBox="0 0 16 16" fill="none" stroke="currentColor" strokeWidth="2"><path d="M.5 8.500 8 1.500l7.500 7M3 7v8h10V7" strokeLinejoin="round" /><path d="M6.500 9.500h3V14h-3z" strokeWidth="1.5" /></svg>
      </IconButton>
      <FoxUrl onSubmit={(e) => e.preventDefault()}>
        <ShieldButton type="button" aria-label="Tracking protection">
          <svg width="13" height="15" viewBox="0 0 13 15" fill="none" stroke="currentColor" strokeWidth="1.6"><path d="M1 2q5.500-2 11 0v5q0 5-5.500 7Q1 12 1 7z" /><path d="M6.500 4v6.500q-2-1.500-2-4V4z" fill="currentColor" stroke="none" /></svg>
        </ShieldButton>
        <UrlButton type="button" $wide aria-label="Connection is not secure">
          <svg width="16" height="16" viewBox="0 0 16 16" fill="none"><rect x="2" y="7" width="12" height="8" rx="1" fill="#7d7c79" /><path d="M4.700 7V5a3.300 3.300 0 0 1 6.600 0v2" stroke="#7d7c79" strokeWidth="1.8" /><path d="M1 15.500 15 1" stroke="#ff1f4b" strokeWidth="1.8" /></svg>
        </UrlButton>
        <Address aria-label="Address" defaultValue="mathcentral.uregina.ca/QQ/database/QQ.09.02/lori3.html" $size={15} $from={90} $to={164} $soft="#8d8c8a" $strong="#2e2d2b" />
        <UrlButton type="button" aria-label="Page actions">
          <svg width="16" height="4" viewBox="0 0 16 4" fill="currentColor"><circle cx="2" cy="2" r="2" /><circle cx="8" cy="2" r="2" /><circle cx="14" cy="2" r="2" /></svg>
        </UrlButton>
        <UrlButton type="button" aria-label="Save to Pocket">
          <svg width="16" height="15" viewBox="0 0 16 15" fill="none" stroke="currentColor" strokeWidth="1.8"><path d="M1 1h14v6q0 6-7 7Q1 13 1 7z" strokeLinejoin="round" /><path d="M4.500 5.500 8 9l3.500-3.500" /></svg>
        </UrlButton>
        <UrlButton type="button" aria-label="Bookmark this page">
          <svg width="16" height="16" viewBox="0 0 16 16" fill="none" stroke="currentColor" strokeWidth="1.6" strokeLinejoin="round"><path d="M8 1l2.200 4.700 5 .6-3.700 3.500 1 5.200L8 12.400 3.500 15l1-5.200L.8 6.300l5-.6z" /></svg>
        </UrlButton>
      </FoxUrl>
      <IconButton aria-label="Library">
        <svg width="16" height="14" viewBox="0 0 16 14" stroke="currentColor" strokeWidth="2"><path d="M1.500 0v14M5 0v14M8.500 0v14M10.500.3l4.500 13.500" /></svg>
      </IconButton>
      <IconButton aria-label="Sidebars">
        <svg width="16" height="14" viewBox="0 0 16 14" fill="none" stroke="currentColor" strokeWidth="1.8"><rect x="1" y="1" width="14" height="12" rx="2" /><path d="M8 1v12M3 4h3M3 6.500h3M3 9h3" strokeWidth="1.3" /></svg>
      </IconButton>
      <IconButton aria-label="Account">
        <svg width="16" height="16" viewBox="0 0 16 16"><circle cx="8" cy="8" r="7" fill="none" stroke="currentColor" strokeWidth="1.5" /><circle cx="8" cy="6" r="2.8" fill="currentColor" /><path d="M3 11.500q5-3.500 10 0-5 4.500-10 0z" fill="currentColor" /></svg>
      </IconButton>
      <IconButton aria-label="Ad blocker">
        <svg width="17" height="17" viewBox="0 0 17 17"><path d="M8.500 0q3 2 8 2 0 11-8 15Q.5 13 .5 2q5 0 8-2z" fill="#9b9b99" /><path d="M8.500 2q3 1.500 6 1.700 0 8.500-6 11.300Q2.500 12 2.500 3.700q3-.2 6-1.700z" fill="#4d4c4a" /><path d="M3 12 14 3.500M5 6l5 5M8 4l4 5" stroke="#d9d9d7" strokeWidth="1.3" /></svg>
      </IconButton>
      <IconButton aria-label="Downloads">
        <svg width="16" height="17" viewBox="0 0 16 17"><path d="M4 0h2v2h1V0h2v2h1V0h2v7h4l-8 9-8-9h4z" fill="#6fae1f" /><path d="M4 0h2v2h1V0h2v2h1V0h2v7H4z" fill="#8fcb30" /></svg>
      </IconButton>
      <MenuButton aria-label="Menu">
        <svg width="12" height="12" viewBox="0 0 12 12" stroke="currentColor" strokeWidth="2"><path d="M0 1h12M0 6h12M0 11h12" /></svg>
      </MenuButton>
    </FoxToolbar>
    <MathPage>
      <MathHeader>
        <LogoCell><PentagonLogo /></LogoCell>
        <MathTitle>Quandaries and Queries</MathTitle>
      </MathHeader>
      <Para>Lori<br />Secondary level<br />Parent trying to help student (other)</Para>
      <Para $after={62}>
        Question:<br />
        It is noon, your lunch hour, but you cannot go out because there is a terrific hailstorm. Turning on your radio you hear the weathercaster predict that the hail will change to rain and that it will pour all day today. How can you determine whether the sun will be shining in 36 hours? Justify your answer.
      </Para>
      <Para>Hi Lori,</Para>
      <Para>What time will it be 36 hours after noon?</Para>
      <Para $after={58}>Claude</Para>
      <CentredLink><a href="#central">Go to Math Central</a></CentredLink>
    </MathPage>
  </Window>
);

const chromeTabs: [string, string][] = [
  ["netflix", "Netflix"],
  ["gmail", "Inbox (64) - ahmedabdulla"],
  ["gmail", "Emumba - Analytical Test -"],
  ["forms", "Analytical Test"],
];

interface QuestionProps { name: string; prompt: string; options: string[]; chosen: string; children?: React.ReactNode }

const Question = ({ name, prompt, options, chosen, children }: QuestionProps) => (
  <Card>
    <Prompt>{prompt}</Prompt>
    {children}
    <Options>
      {options.map((o) => (
        <Option key={o}><Radio type="radio" name={name} defaultChecked={o === chosen} />{o}</Option>
      ))}
    </Options>
    <CardFooter><ClearButton type="button">Clear selection</ClearButton></CardFooter>
  </Card>
);

const Chrome = () => {
  const scroller = useRef<HTMLDivElement>(null);
  useLayoutEffect(() => {
    if (scroller.current) scroller.current.scrollTop = 27;
  }, []);
  return (
    <Window>
      <ChromeTabs role="tablist">
        {chromeTabs.map(([icon, title], i) => (
          <ChromeTab key={title} role="tab" aria-selected={i === 3} $active={i === 3} $line={i < 2}>
            {favicons[icon]}
            <TabTitle>{title}</TabTitle>
            <CloseButton aria-label="Close tab"><Cross /></CloseButton>
          </ChromeTab>
        ))}
        <ChromeNewTab aria-label="New tab"><Plus size={12} /></ChromeNewTab>
      </ChromeTabs>
      <ChromeToolbar>
        <IconButton aria-label="Back"><MdArrowBack size={20} /></IconButton>
        <IconButton aria-label="Forward" $faded><MdArrowForward size={20} /></IconButton>
        <IconButton aria-label="Reload"><MdRefresh size={20} /></IconButton>
        <ChromeUrl onSubmit={(e) => e.preventDefault()}>
          <MdLock size={14} />
          <Address aria-label="Address" defaultValue="docs.google.com/forms/d/e/1FAIpQLSfg6Ne3vEow3uhdaPtRVMiNBHAdKeXqCCg-Z3JykKXnxvAlvA/formResponse" $size={14} $from={0} $to={112} $soft="#7b7a77" $strong="#2e2d2b" />
          <MdOutlineStarBorder size={18} />
        </ChromeUrl>
        <IconButton aria-label="Media controls"><MdQueueMusic size={20} /></IconButton>
        <Avatar aria-label="Profile">
          <svg width="22" height="22" viewBox="0 0 22 22"><circle cx="11" cy="11" r="11" fill="#6b4a08" /><path d="M0 11h22a11 11 0 0 1-22 0z" fill="#46300a" /><circle cx="11" cy="6" r="2.8" fill="#c98f30" /><path d="M6 20V11q5-4 10 0v9q-5 3-10 0z" fill="#21160a" /></svg>
        </Avatar>
        <IconButton aria-label="Menu"><MdMoreVert size={20} /></IconButton>
      </ChromeToolbar>
      <FormArea>
        <FeedbackSpot><MdFeedback size={23} aria-label="Report a problem" /></FeedbackSpot>
        <FormScroll ref={scroller}>
          <FormColumn>
            <Question
              name="q3"
              prompt="3. If the radius of a circle is increased by 20% then the area is increased by:"
              options={["44%", "120%", "144%", "40%", "None of the above"]}
              chosen="None of the above"
            />
            <Question
              name="q4"
              prompt="4. Refer to the figure below: Four concentric (having the same center) circles with radii, x, 2x, 3x and 4x are drawn to form two rings A and B as shown in the figure.Ratio of the area of inner ring A to the area of outer ring B is"
              options={["1 : 2", "1 : 4", "2 : 3", "3 : 7", "None of the above"]}
              chosen="3 : 7"
            >
              <Figure><Rings /></Figure>
            </Question>
            <Card $empty />
          </FormColumn>
        </FormScroll>
        <ScrollTrack>
          <svg width="7" height="4" viewBox="0 0 7 4"><path d="M3.500 0 7 4H0z" fill="#505050" /></svg>
          <ScrollThumb />
        </ScrollTrack>
      </FormArea>
    </Window>
  );
};

export default function App() {
  return (
    <>
      <GlobalStyle />
      <Desktop>
        <Screen>
          <SystemPanel />
          <Workspace>
            <Launcher screen="left" />
            <Firefox />
          </Workspace>
        </Screen>
        <Screen $shorter>
          <SystemPanel title="Analytical Test - Google Chrome" />
          <Workspace>
            <Launcher screen="right" />
            <Chrome />
          </Workspace>
        </Screen>
      </Desktop>
    </>
  );
}
